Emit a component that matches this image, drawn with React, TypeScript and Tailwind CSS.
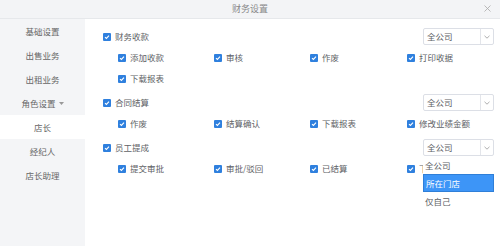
import React from "react";

const FONT = { fontFamily: '"Noto Sans CJK SC", "Noto Sans", sans-serif' };

type Group = {
  title: string;
  items: string[];
};

const GROUPS: Group[] = [
  { title: "财务收款", items: ["添加收款", "审核", "作废", "打印收据", "下载报表"] },
  { title: "合同结算", items: ["作废", "结算确认", "下载报表", "修改业绩金额"] },
  { title: "员工提成", items: ["提交审批", "审批/驳回", "已结算", "下载报表"] },
];

const MENU = ["基础设置", "出售业务", "出租业务", "角色设置", "店长", "经纪人", "店长助理"];

function Check({ label }: { label: string }) {
  return (
    <div className="flex items-center gap-[4px] h-[21px] whitespace-nowrap">
      <span className="w-[8px] h-[8px] rounded-[1px] bg-[#2f80de] flex items-center justify-center shrink-0">
        <svg width="6" height="6" viewBox="0 0 6 6">
          <path d="M1 3.1 L2.4 4.4 L5 1.6" fill="none" stroke="#fff" strokeWidth="1.1" />
        </svg>
      </span>
      <span>{label}</span>
    </div>
  );
}

function Select({ open }: { open?: boolean }) {
  return (
    <div className="relative">
      <div className="w-[71px] h-[17px] border border-[#dcdfe6] rounded-[2px] bg-white flex items-center">
        <span className="flex-1 pl-[3px]">全公司</span>
        <span className="w-[13px] h-full border-l border-[#e3e5ea] flex items-center justify-center">
          <svg width="6" height="4" viewBox="0 0 6 4">
            <path d="M0.5 0.8 L3 3.2 L5.5 0.8" fill="none" stroke="#999" strokeWidth="0.8" />
          </svg>
        </span>
      </div>
      {open && (
        <div className="absolute left-0 top-[17px] w-[71px] bg-white z-10">
          <div className="h-[18px] pl-[2px] flex items-center">全公司</div>
          <div className="h-[18px] pl-[2px] flex items-center text-white bg-[#3d95f7] border border-[#2f7fd8]">所在门店</div>
          <div className="h-[18px] pl-[2px] flex items-center">仅自己</div>
        </div>
      )}
    </div>
  );
}

export default function App() {
  return (
    <div className="w-[500px] h-[246px] bg-white text-[8.5px] text-[#606266] overflow-hidden flex flex-col" style={FONT}>
      {/* Header */}
      <div className="h-[19px] shrink-0 bg-[#f3f4f6] border-b border-[#e6e8eb] flex items-center justify-center relative">
        <span className="text-[9px] text-[#888]">财务设置</span>
        <svg className="absolute right-[9px] top-[5px]" width="7" height="7" viewBox="0 0 7 7">
          <path d="M0.5 0.5 L6.5 6.5 M6.5 0.5 L0.5 6.5" stroke="#aaa" strokeWidth="0.8" />
        </svg>
      </div>

      <div className="flex-1 flex min-h-0">
        {/* Sidebar */}
        <div className="w-[85px] shrink-0 bg-[#f4f5f7] flex flex-col text-[#666]">
          {MENU.map((m) => (
            <div
              key={m}
              className={`h-[24px] flex items-center justify-center gap-[3px] ${m === "店长" ? "bg-white" : ""}`}
            >
              <span>{m}</span>
              {m === "角色设置" && (
                <svg width="5" height="3" viewBox="0 0 5 3">
                  <path d="M0 0 L5 0 L2.5 3 Z" fill="#999" />
                </svg>
              )}
            </div>
          ))}
        </div>

        {/* Content */}
        <div className="flex-1 pl-[18px] pr-[6px] pt-[7px] flex flex-col gap-[3px]">
          {GROUPS.map((g, gi) => (
            <div key={g.title}>
              <div className="h-[21px] flex items-center justify-between">
                <Check label={g.title} />
                <Select open={gi === 2} />
              </div>
              <div className="pl-[15px] grid grid-cols-[96px_96px_97px_1fr]">
                {g.items.map((it, i) => (
                  <Check key={i} label={it} />
                ))}
              </div>
            </div>
          ))}
        </div>
      </div>
    </div>
  );
}
